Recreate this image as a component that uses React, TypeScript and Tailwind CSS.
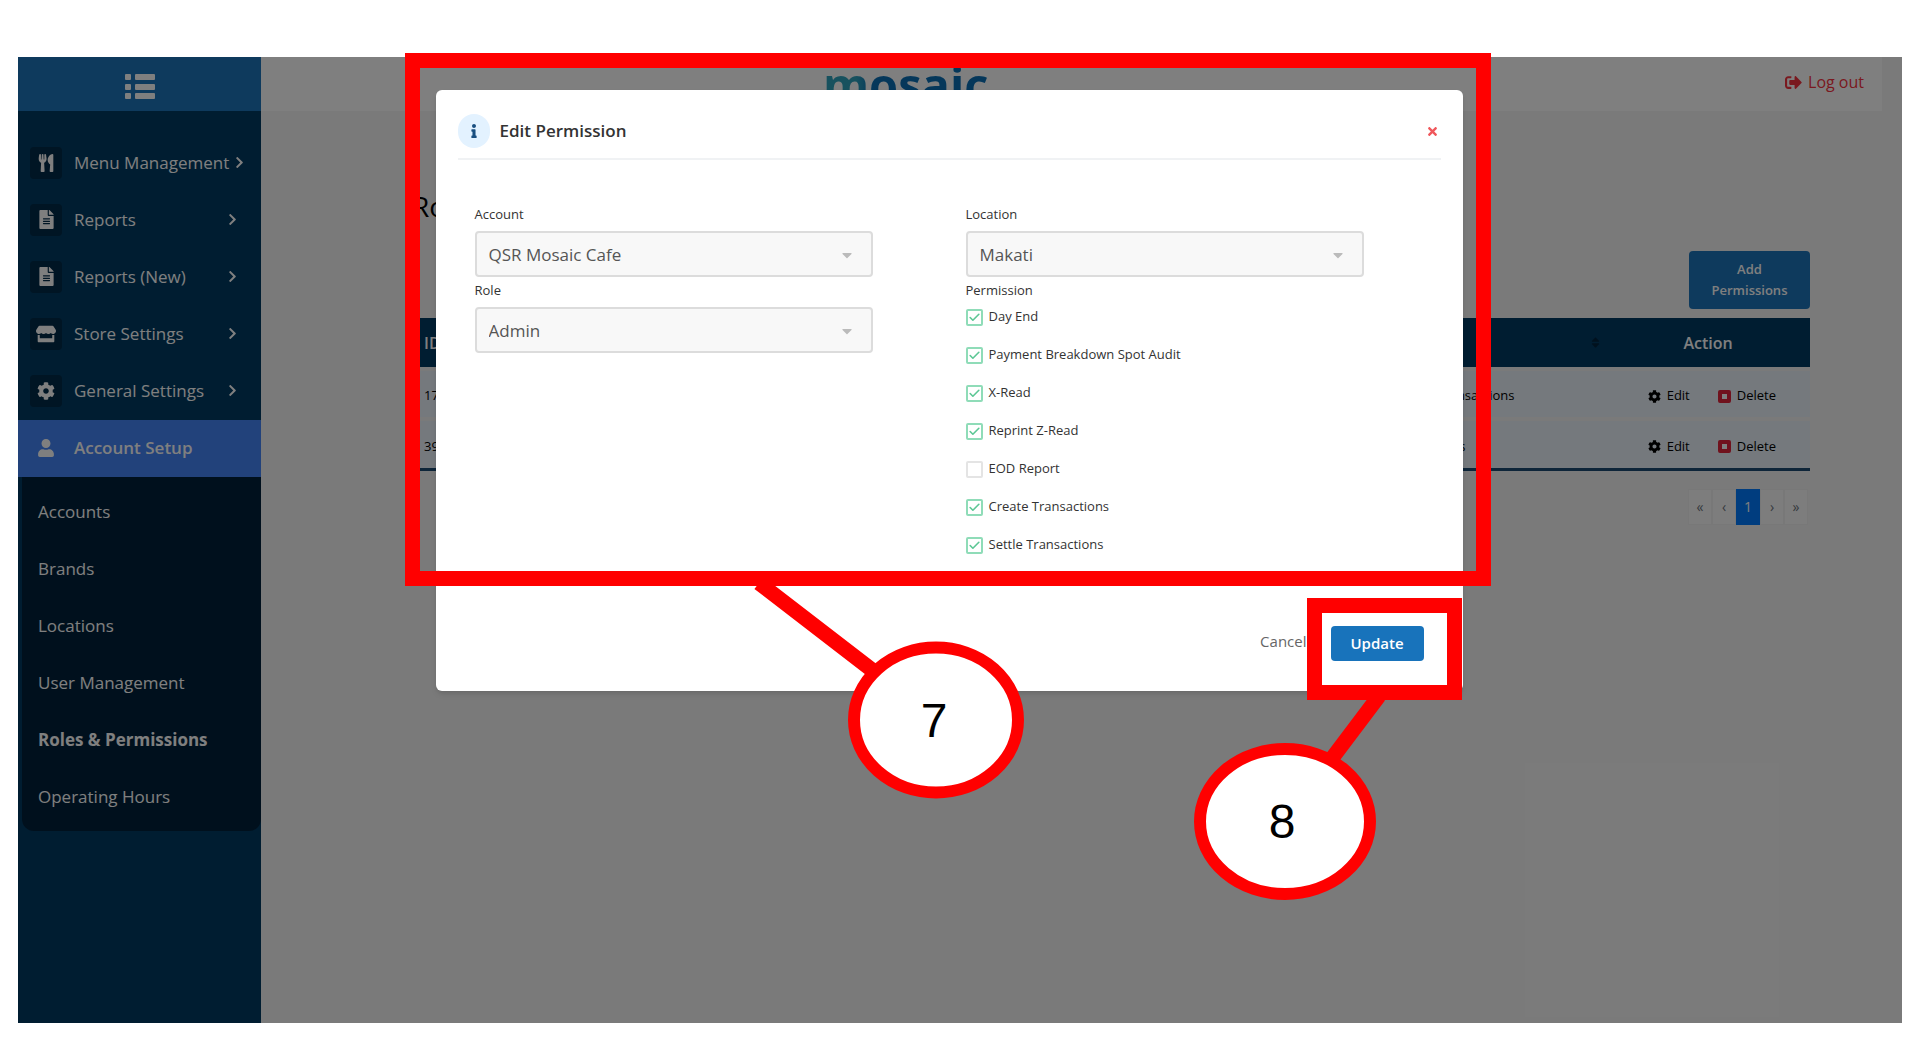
import { ReactNode, useState } from 'react';
import { Check } from 'lucide-react';
import {
  FaCaretDown,
  FaChevronRight,
  FaCog,
  FaFileAlt,
  FaInfo,
  FaSignOutAlt,
  FaSort,
  FaStore,
  FaTimes,
  FaUser,
  FaUtensils,
} from 'react-icons/fa';

const menuItems: { label: string; icon: ReactNode }[] = [
  { label: 'Menu Management', icon: <FaUtensils size={18} /> },
  { label: 'Reports', icon: <FaFileAlt size={19} /> },
  { label: 'Reports (New)', icon: <FaFileAlt size={19} /> },
  { label: 'Store Settings', icon: <FaStore size={20} /> },
  { label: 'General Settings', icon: <FaCog size={18} /> },
];

const subItems = [
  'Accounts',
  'Brands',
  'Locations',
  'User Management',
  'Roles & Permissions',
  'Operating Hours',
];

const initialPermissions = [
  { label: 'Day End', checked: true },
  { label: 'Payment Breakdown Spot Audit', checked: true },
  { label: 'X-Read', checked: true },
  { label: 'Reprint Z-Read', checked: true },
  { label: 'EOD Report', checked: false },
  { label: 'Create Transactions', checked: true },
  { label: 'Settle Transactions', checked: true },
];

const rows = [
  { id: '17', permission: 'X-Read, Reprint Z-Read, Create Transactions, Settle Transactions' },
  { id: '39', permission: 'Reprint Z-Read, Create Transactions, Settle Transactions' },
];

const pages = ['«', '‹', '1', '›', '»'];

function Sidebar() {
  return (
    <aside className="w-[243px] shrink-0 bg-[#003a62] text-white">
      <button aria-label="Toggle menu" className="flex h-[54px] w-full items-center justify-center bg-[#1c74ba] pt-1.5">
        <svg width="30" height="26" viewBox="0 0 30 26" fill="currentColor">
          {[0, 10, 19].map((y) => (
            <g key={y}>
              <rect x="0" y={y} width="6" height="6" rx="1" />
              <rect x="10" y={y} width="20" height="6" rx="1" />
            </g>
          ))}
        </svg>
      </button>
      <nav className="pt-6">
        {menuItems.map((item) => (
          <a key={item.label} href="#" className="flex h-[57px] items-center pb-0.5 pl-3 text-[17px]">
            <span className="flex size-8 shrink-0 items-center justify-center rounded bg-[#002a48]">{item.icon}</span>
            <span className="ml-3 min-w-[148px] whitespace-nowrap">{item.label}</span>
            <FaChevronRight size={13} className="ml-1 shrink-0" />
          </a>
        ))}
        <a href="#" className="flex h-[57px] items-center bg-[#4484f6] pb-0.5 pl-3 text-[17px] font-semibold">
          <span className="flex size-8 shrink-0 items-center justify-center">
            <FaUser size={18} />
          </span>
          <span className="ml-3">Account Setup</span>
        </a>
        <div className="ml-1 rounded-b-xl bg-[#00213a] py-1.5">
          {subItems.map((label) => (
            <a
              key={label}
              href="#"
              className={`flex h-[57px] items-center pl-4 text-[17px] ${label === 'Roles & Permissions' ? 'font-bold' : ''}`}
            >
              {label}
            </a>
          ))}
        </div>
      </nav>
    </aside>
  );
}

function RolesPage() {
  return (
    <main className="min-w-0 flex-1 bg-[#f5f5f5]">
      <header className="mr-5 flex h-[54px] items-center justify-between bg-white pr-[18px] pb-1 pl-[34%]">
        <span className="ml-1 bg-linear-to-r from-[#2fa3bd] from-20% to-[#0a6fb5] to-30% bg-clip-text pt-1 text-[47px] leading-none font-bold text-transparent">
          mosaic
        </span>
        <a href="#" className="flex items-center gap-1.5 text-base text-[#f5333f]">
          <FaSignOutAlt size={17} />
          Log out
        </a>
      </header>

      <div className="mr-[92px] ml-[147px] pt-[75px]">
        <h1 className="pl-1 text-[28px] leading-10 font-medium text-black">Roles & Permissions</h1>
        <div className="mt-[25px] flex justify-end">
          <button className="w-[121px] rounded bg-[#1c74ba] px-4 py-2 text-[13px] leading-[21px] font-semibold text-white">
            Add Permissions
          </button>
        </div>
        <table className="mt-[9px] w-full border-b-3 border-[#1c4a73] text-[13px] text-black">
          <thead>
            <tr className="h-[51px] bg-[#003a62] text-base text-white">
              <th className="w-[30%] pl-4 text-left font-semibold">ID</th>
              <th>
                <div className="flex items-center justify-between pr-1 pl-[298px] font-semibold">
                  Permission
                  <FaSort size={13} className="text-[#00233c]" />
                </div>
              </th>
              <th className="w-[204px] font-semibold">Action</th>
            </tr>
          </thead>
          <tbody>
            {rows.map((row) => (
              <tr key={row.id} className="h-[50px] border-t-4 border-[#f5f5f5] bg-[#ebf3fb]">
                <td className="pt-1 pl-4">{row.id}</td>
                <td className="pt-1 pl-[298px] whitespace-nowrap">{row.permission}</td>
                <td className="pt-1">
                  <div className="flex justify-end gap-7 pr-[34px]">
                    <button className="flex items-center gap-1.5">
                      <FaCog size={13} />
                      Edit
                    </button>
                    <button className="flex items-center gap-1.5">
                      <span className="size-[13px] rounded-xs border-4 border-[#e0243b] bg-white" />
                      Delete
                    </button>
                  </div>
                </td>
              </tr>
            ))}
          </tbody>
        </table>
        <div className="mt-[18px] flex justify-end pr-0.5">
          {pages.map((page) => (
            <button
              key={page}
              className={`h-9 w-6 border text-sm ${
                page === '1' ? 'border-[#007bff] bg-[#007bff] text-base text-white' : 'border-[#f0f0f0] bg-[#fbfbfb] text-[#6c757d]'
              }`}
            >
              {page}
            </button>
          ))}
        </div>
      </div>
    </main>
  );
}

function SelectField({ id, label, value }: { id: string; label: string; value: string }) {
  return (
    <div>
      <label htmlFor={id} className="block text-[13px] leading-5 text-[#333]">
        {label}
      </label>
      <div className="relative mt-[7px]">
        <select
          id={id}
          disabled
          className="h-[46px] w-full appearance-none rounded border-2 border-[#dcdcdc] bg-[#f8f8f8] px-3 pt-0.5 text-[17px] text-[#555] opacity-100"
        >
          <option>{value}</option>
        </select>
        <FaCaretDown size={16} className="pointer-events-none absolute top-4 right-[18px] text-[#bbb]" />
      </div>
    </div>
  );
}

function EditPermissionModal() {
  const [permissions, setPermissions] = useState(initialPermissions);

  const toggle = (label: string) => {
    setPermissions(permissions.map((p) => (p.label === label ? { ...p, checked: !p.checked } : p)));
  };

  return (
    <div role="dialog" aria-label="Edit Permission" className="w-full max-w-[1027px] rounded-md bg-white pt-6 shadow-md">
      <div className="mx-[22px] flex items-center border-b-2 border-[#f0f2f4] pb-[10px]">
        <span className="flex h-[34px] w-8 items-center justify-center rounded-full bg-[#e3f2ff] text-[#1a4f80]">
          <FaInfo size={14} />
        </span>
        <h2 className="ml-[10px] text-[17px] font-semibold text-[#333]">Edit Permission</h2>
        <button aria-label="Close" className="ml-auto p-0.5 text-[#f0575b]">
          <FaTimes size={13} />
        </button>
      </div>

      <div className="grid grid-cols-2 gap-[93px] pt-11 pr-[99px] pl-[39px]">
        <div className="flex flex-col gap-[3px]">
          <SelectField id="account" label="Account" value="QSR Mosaic Cafe" />
          <SelectField id="role" label="Role" value="Admin" />
        </div>
        <div className="flex flex-col gap-[3px]">
          <SelectField id="location" label="Location" value="Makati" />
          <fieldset>
            <legend className="text-[13px] leading-5 text-[#333]">Permission</legend>
            <div className="mt-[7px] flex flex-col gap-[18px]">
              {permissions.map((p) => (
                <label key={p.label} className="flex h-5 items-center gap-1.5 text-[13px] text-[#333]">
                  <span className="relative flex">
                    <input
                      type="checkbox"
                      checked={p.checked}
                      onChange={() => toggle(p.label)}
                      className="peer size-[17px] appearance-none rounded-xs border-2 border-[#e4e4e4] bg-white checked:border-[#8fdcb8]"
                    />
                    <Check
                      size={13}
                      strokeWidth={3}
                      className="pointer-events-none absolute top-0.5 left-0.5 hidden text-[#5cc795] peer-checked:block"
                    />
                  </span>
                  {p.label}
                </label>
              ))}
            </div>
          </fieldset>
        </div>
      </div>

      <div className="flex items-center justify-end gap-6 pt-[71px] pr-[39px] pb-[30px]">
        <button className="pb-1 text-[15px] text-[#666]">Cancel</button>
        <button className="h-[35px] w-[93px] rounded bg-[#1873bb] text-[15px] font-semibold text-white">Update</button>
      </div>
    </div>
  );
}

// Numbered callouts drawn over the page
function Callouts() {
  return (
    <svg
      viewBox="0 0 1920 1052"
      className="pointer-events-none absolute top-0 left-0 w-full font-['Liberation_Sans',sans-serif]"
      fill="none"
      stroke="#ff0000"
    >
      <rect x="412.5" y="60.5" width="1071" height="518" strokeWidth="15" />
      <rect x="1314.5" y="605.5" width="140" height="87" strokeWidth="15" />
      <path d="M759 583L872 670M1379 696L1330 761" strokeWidth="15" />
      <ellipse cx="936" cy="720" rx="82" ry="72.5" strokeWidth="12" fill="#fff" />
      <ellipse cx="1285" cy="821.5" rx="85" ry="72.5" strokeWidth="12" fill="#fff" />
      <text x="934" y="737" fontSize="48" textAnchor="middle" fill="#000" stroke="none">
        7
      </text>
      <text x="1282" y="838" fontSize="48" textAnchor="middle" fill="#000" stroke="none">
        8
      </text>
    </svg>
  );
}

export default function App() {
  return (
    <div className="relative flex min-h-screen bg-white px-[18px] pt-[57px] pb-[29px] font-['Open_Sans',sans-serif]">
      <div className="relative flex flex-1">
        <Sidebar />
        <RolesPage />
        <div className="absolute inset-0 flex items-start justify-center bg-black/50 pt-[33px] pr-[22px]">
          <EditPermissionModal />
        </div>
      </div>
      <Callouts />
    </div>
  );
}
